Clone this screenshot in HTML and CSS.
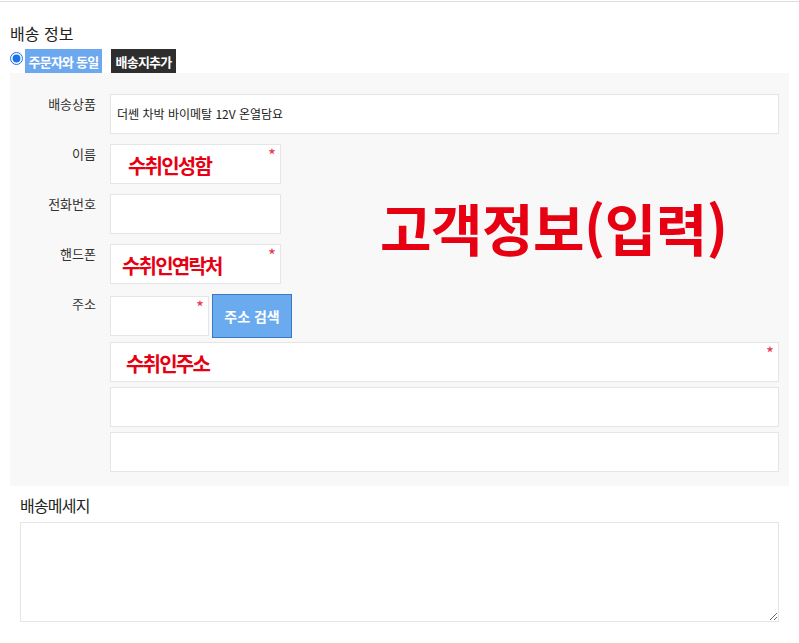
FILE: index.html
```html
<!DOCTYPE html>
<html lang="ko">
<head>
    <meta charset="UTF-8">
    <meta name="viewport" content="width=device-width, initial-scale=1.0">
    <title>배송 정보</title>
    <link rel="stylesheet" href="styles.css">
</head>
<body>
    <div class="page">
        <h3 class="title">배송 정보</h3>

        <div class="options">
            <input type="radio" name="addr" class="radio" checked>
            <span class="tag tag-blue">주문자와 동일</span>
            <span class="tag tag-dark">배송지추가</span>
        </div>

        <div class="panel">
            <div class="overlay-title">고객정보(입력)</div>

            <div class="row">
                <div class="label">배송상품</div>
                <div class="field full product">더쎈 차박 바이메탈 12V 온열담요</div>
            </div>

            <div class="row">
                <div class="label">이름</div>
                <div class="field short"><span class="note">수취인성함</span><i class="req">*</i></div>
            </div>

            <div class="row">
                <div class="label">전화번호</div>
                <div class="field short"></div>
            </div>

            <div class="row">
                <div class="label">핸드폰</div>
                <div class="field short"><span class="note note-tight">수취인연락처</span><i class="req">*</i></div>
            </div>

            <div class="row row-addr">
                <div class="label">주소</div>
                <div class="addr-line">
                    <div class="field zip"><i class="req">*</i></div>
                    <button class="btn-search">주소 검색</button>
                </div>
            </div>

            <div class="row row-sub">
                <div class="label"></div>
                <div class="field full"><span class="note note-addr">수취인주소</span><i class="req">*</i></div>
            </div>
            <div class="row row-sub">
                <div class="label"></div>
                <div class="field full"></div>
            </div>
            <div class="row row-sub">
                <div class="label"></div>
                <div class="field full"></div>
            </div>
        </div>

        <div class="message">
            <h4 class="message-title">배송메세지</h4>
            <textarea class="message-box"></textarea>
        </div>
    </div>
</body>
</html>
```

FILE: styles.css
```css
body {
    margin: 0;
    font-family: "Noto Sans CJK KR", "Liberation Sans", sans-serif;
    color: #222;
    background: #fff;
}
.page {
    margin-top: 1px;
    border-top: 1px solid #dcdcdc;
    padding: 0 10px;
}
.title {
    margin: 19px 0 4px;
    font-size: 16px;
    font-weight: normal;
    line-height: 24px;
    color: #222;
}
.options {
    display: flex;
    align-items: flex-start;
    height: 24px;
}
.radio {
    width: 13px;
    height: 13px;
    margin: 3px 2px 0 0;
    accent-color: #1a73e8;
}
.tag {
    display: inline-block;
    box-sizing: border-box;
    height: 24px;
    line-height: 25px;
    font-size: 13px;
    font-weight: bold;
    color: #fff;
    text-align: center;
    white-space: nowrap;
    letter-spacing: -0.8px;
}
.tag-blue {
    background: #6ba8ef;
    width: 77px;
}
.tag-dark {
    background: #2e2e2e;
    margin-left: 9px;
    width: 65px;
}
.panel {
    position: relative;
    background: #f8f8f8;
    padding: 21px 0 14px;
    width: 779px;
}
.row {
    display: flex;
    margin-bottom: 10px;
}
.row-addr {
    margin-bottom: 4px;
}
.row-sub {
    margin-bottom: 5px;
}
.row-sub:last-child {
    margin-bottom: 0;
}
.label {
    width: 86px;
    flex-shrink: 0;
    margin-right: 14px;
    text-align: right;
    font-size: 13px;
    color: #333;
    line-height: 20px;
}
.field {
    position: relative;
    box-sizing: border-box;
    height: 40px;
    background: #fff;
    border: 1px solid #e5e5e5;
}
.full {
    width: 669px;
}
.short {
    width: 171px;
}
.zip {
    width: 99px;
    margin-top: 2px;
}
.product {
    font-size: 12px;
    line-height: 38px;
    padding-left: 6px;
    color: #222;
}
.note {
    position: absolute;
    left: 17px;
    top: 7px;
    font-size: 20px;
    font-weight: bold;
    color: #e60012;
    letter-spacing: -1.8px;
    line-height: 28px;
}
.note-tight {
    left: 11px;
}
.note-addr {
    left: 15px;
}
.req {
    position: absolute;
    right: 4px;
    top: 3px;
    font-style: normal;
    font-size: 17px;
    line-height: 14px;
    color: #e8374a;
}
.addr-line {
    display: flex;
    height: 44px;
}
.btn-search {
    width: 80px;
    height: 44px;
    margin-left: 3px;
    background: #6aabf0;
    border: 1px solid #3b78c4;
    color: #fff;
    font-family: inherit;
    font-size: 14px;
    font-weight: bold;
    padding: 0;
}
.overlay-title {
    position: absolute;
    left: 370px;
    top: 119px;
    font-size: 56px;
    font-weight: bold;
    color: #e60012;
    line-height: 70px;
    letter-spacing: -0.5px;
}
.message {
    padding: 7px 10px 0;
}
.message-title {
    margin: 0 0 5px;
    font-size: 16px;
    font-weight: normal;
    line-height: 24px;
    color: #222;
    letter-spacing: -0.8px;
}
.message-box {
    display: block;
    box-sizing: border-box;
    width: 759px;
    height: 100px;
    border: 1px solid #e5e5e5;
    margin: 0;
    resize: vertical;
}
```
